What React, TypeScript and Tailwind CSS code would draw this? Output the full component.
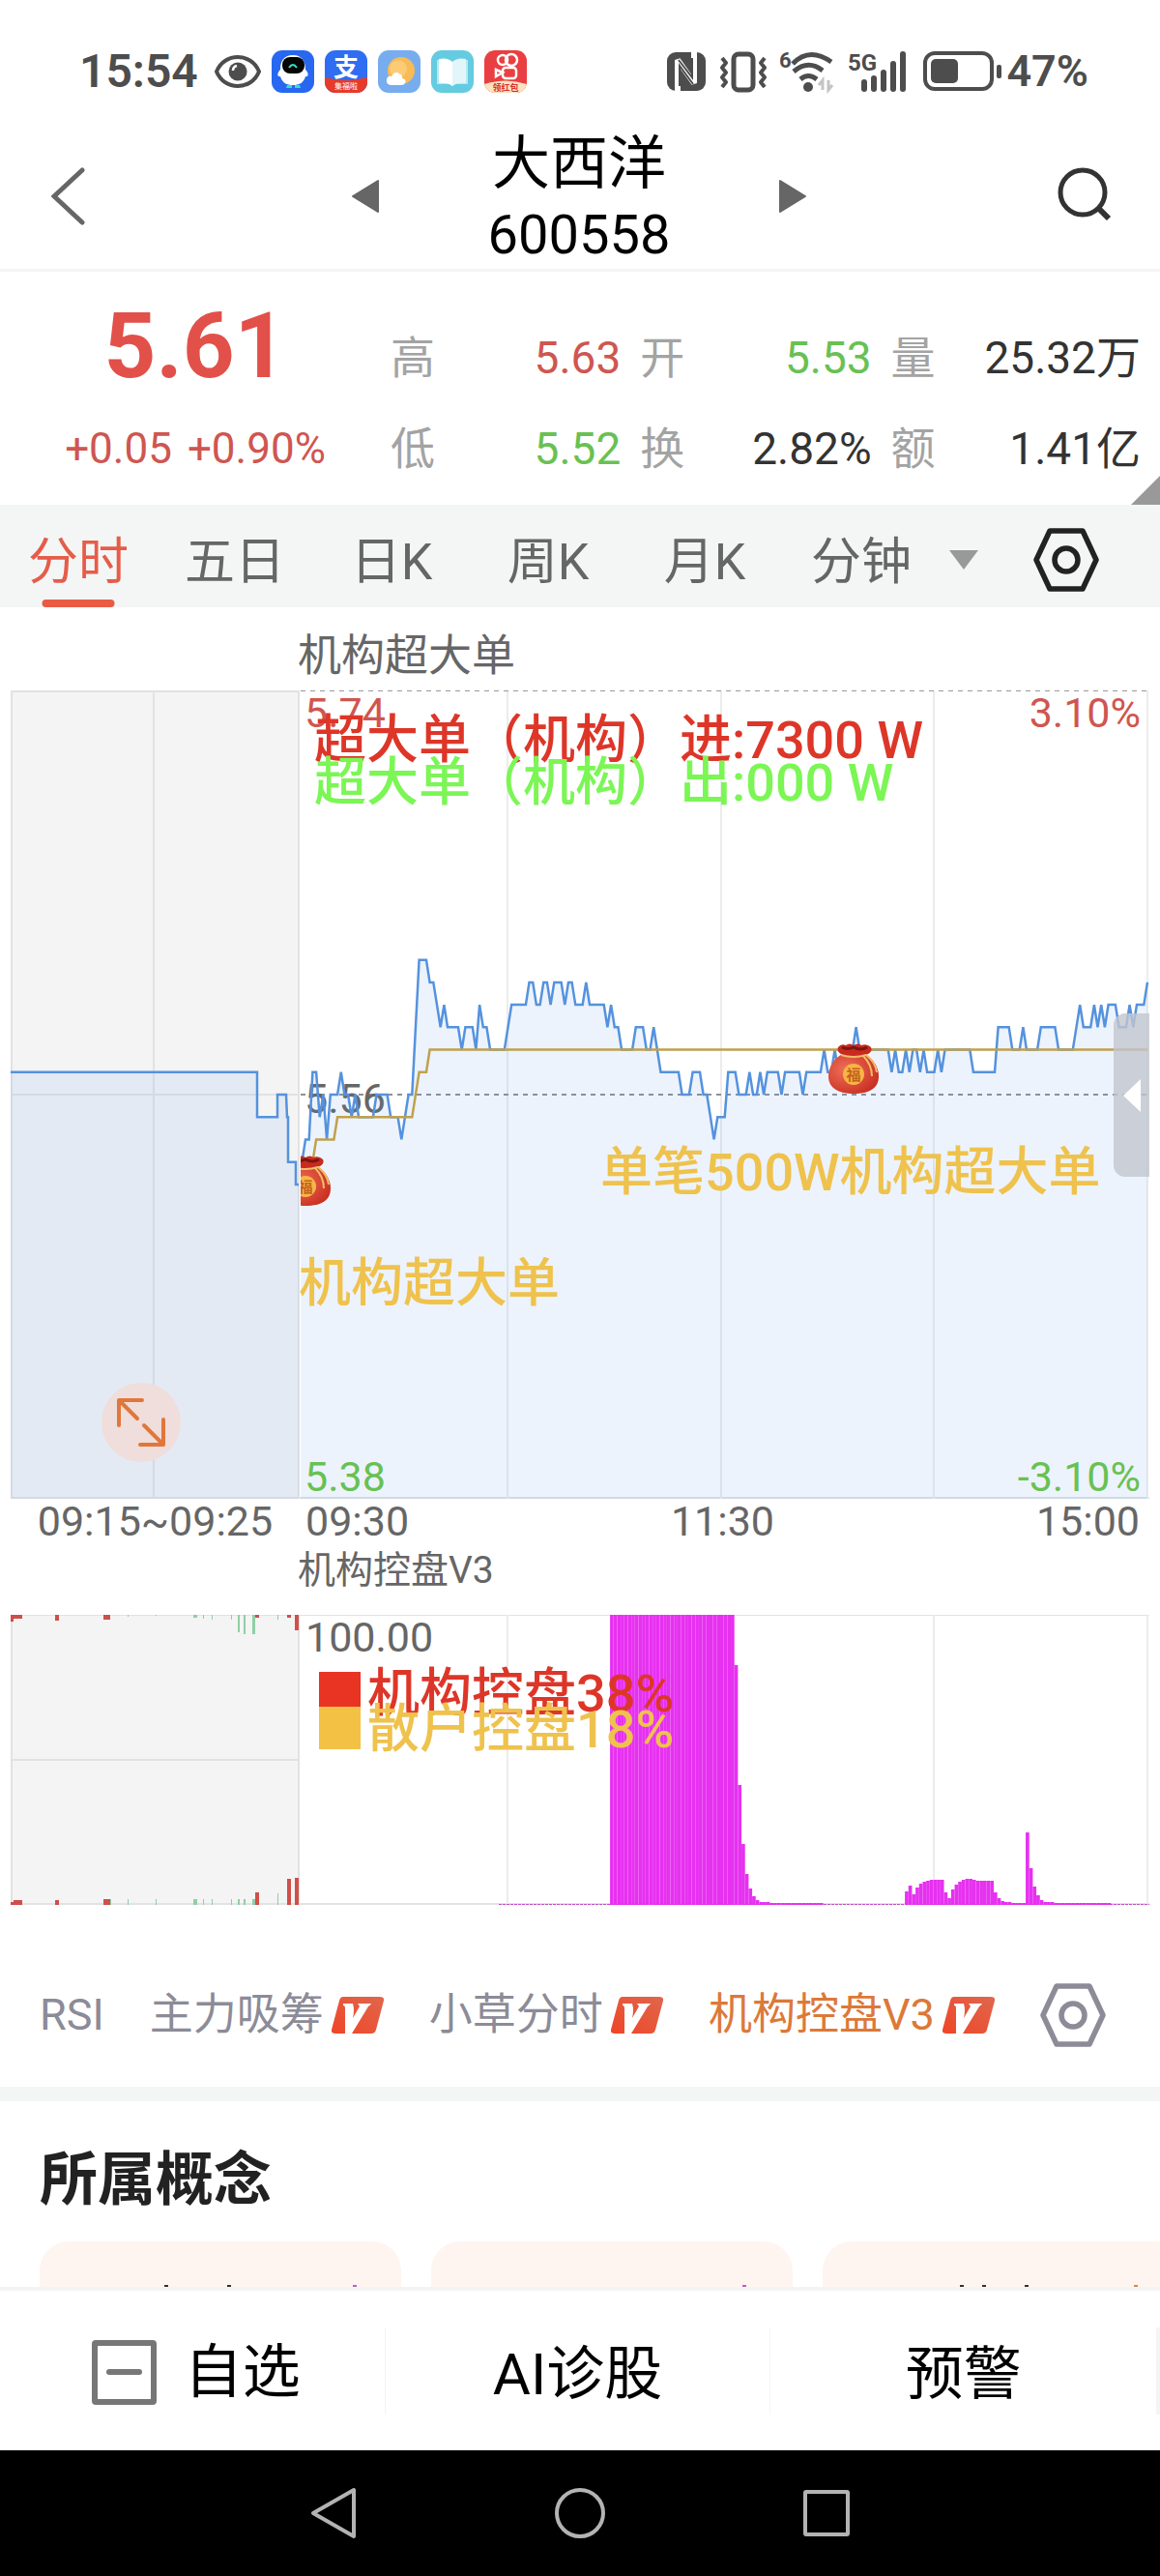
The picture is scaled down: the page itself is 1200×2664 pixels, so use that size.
import React from 'react';

const FONT = "font-[Roboto,'Noto_Sans_CJK_SC',sans-serif]";

type Point = [number, number];

// Chart geometry: one step per minute, one step per 0.01 around the previous close
const CHART_W = 1178;
const CHART_H = 836;
const OPEN_X = 294;
const PANE_X = 299;
const MINUTE = 3.675;
const TICK = CHART_H / 36;

const GRID_X = [514, 735, 955, 1176];

const PRE_OPEN: Point[] = [
  [0, 1], [255, 1], [255, -1], [276, -1], [276, 0], [285, 0], [286, -1], [287, -1], [287, -3], [295, -3], [295, -4], [298, -4],
];

const PRICE: Point[] = [
  [1, -4], [2, -3], [3, -2], [4, -2], [5, 1], [6, 1], [7, -1], [8, 0], [9, -2], [10, 0], [12, 0], [13, 1], [14, 0],
  [15, 0], [16, -1], [17, 0], [18, -1], [22, -1], [23, 0], [26, 0], [27, -1], [29, -1], [30, -2], [32, 0], [33, 0],
  [35, 6], [37, 6], [38, 5], [39, 5], [41, 3], [42, 4], [43, 3], [46, 3], [47, 2], [48, 3], [50, 3], [51, 2], [52, 4],
  [53, 3], [54, 3], [55, 2], [59, 2], [61, 4], [65, 4], [66, 5], [67, 5], [68, 4], [69, 4], [70, 5], [71, 5], [72, 4],
  [73, 5], [75, 5], [76, 4], [77, 5], [78, 5], [79, 4], [81, 4], [82, 5], [83, 4], [87, 4], [88, 3], [89, 4], [90, 3],
  [91, 3], [92, 2], [95, 2], [96, 3], [98, 3], [99, 2], [100, 2], [101, 3], [103, 1], [108, 1], [109, 0], [111, 0],
  [112, 1], [114, 1], [115, 0], [116, 0], [118, -2], [119, -1], [121, -1], [122, 1], [124, 1], [125, 0], [127, 0],
  [128, 1], [129, 0], [130, 0], [131, 1], [132, 0], [133, 1], [136, 1], [137, 0], [138, 1], [142, 1], [143, 0],
  [144, 1], [148, 1], [149, 2], [150, 1], [151, 1], [152, 2], [153, 1], [156, 1], [157, 2], [158, 3], [159, 2],
  [167, 2], [168, 1], [169, 2], [170, 1], [171, 1], [172, 2], [173, 1], [174, 2], [175, 2], [176, 1], [177, 2],
  [178, 1], [180, 1], [181, 2], [182, 1], [183, 2], [190, 2], [191, 1], [197, 1], [198, 3], [201, 3], [202, 2],
  [204, 2], [205, 3], [206, 2], [209, 2], [210, 3], [214, 3], [215, 2], [219, 2], [221, 4], [222, 3], [224, 3],
  [225, 4], [226, 3], [227, 4], [228, 3], [229, 4], [231, 4], [232, 3], [234, 3], [235, 4], [236, 3], [237, 4],
  [239, 4], [240, 5],
];

const AVERAGE: Point[] = [
  [4, -4], [5, -3], [6, -2], [11, -2], [12, -1], [33, -1], [35, 1], [37, 1], [38, 2], [240, 2],
];

const priceY = (level: number) => CHART_H / 2 - level * TICK;
const minuteX = (minute: number) => OPEN_X + minute * MINUTE;
const join = (points: Point[]) => points.map(([x, y]) => `${x.toFixed(1)},${y.toFixed(1)}`).join(' ');

const preLine = join(PRE_OPEN.map(([x, l]) => [x, priceY(l)]));
const priceLine = join(PRICE.map(([m, l]) => [minuteX(m), priceY(l)]));
const averageLine = join(AVERAGE.map(([m, l]) => [minuteX(m), priceY(l)]));

// Control indicator: start minute and bar heights out of 300
const CONTROL: { start: number; bars: number[] }[] = [
  { start: 89, bars: [...Array(35).fill(300), 248, 124, 63, 32, 17, 9, 5, 3, 3, 3, ...Array(15).fill(2)] },
  {
    start: 172,
    bars: [14, 20, 11, 18, 22, 24, 25, 26, 26, 26, 26, 13, 7, 16, 21, 24, 26, 27, 27, 26, 25, 25, 25, 25, 25, 13, 7, 4, 3, 3, 2, 2, 2, 2],
  },
  { start: 206, bars: [75, 38, 19, 10, 5, 3, 3, 3, ...Array(16).fill(2)] },
];

const RED = '#cf4f4a';
const GREEN = '#8fcfa6';

// x, width, height from the top edge, height from the bottom edge, colour
const AUCTION: [number, number, number, number, string][] = [
  [0, 3, 7, 3, RED], [3, 9, 4, 5, RED], [46, 4, 6, 5, RED], [96, 7, 5, 6, RED], [103, 1, 0, 6, GREEN],
  [121, 1, 2, 6, GREEN], [150, 1, 1, 6, GREEN], [189, 4, 3, 6, GREEN], [199, 1, 4, 6, GREEN], [208, 1, 5, 6, GREEN],
  [228, 1, 5, 6, GREEN], [235, 2, 18, 6, GREEN], [241, 2, 20, 6, GREEN], [250, 3, 20, 6, GREEN], [253, 4, 3, 13, RED],
  [276, 1, 5, 12, GREEN], [286, 4, 3, 27, RED], [294, 4, 16, 28, RED],
];

const HexIcon = ({ color, className }: { color: string; className: string }) => (
  <svg viewBox="0 0 68 66" className={className} fill="none" stroke={color} aria-hidden="true">
    <path d="M17 3H51L65 33L51 63H17L3 33Z" strokeWidth="5.5" strokeLinejoin="round" />
    <circle cx="34" cy="33" r="12" strokeWidth="5.5" />
  </svg>
);

const VipBadge = () => (
  <svg viewBox="0 0 54 38" className="h-[38px] w-[54px]" aria-hidden="true">
    <defs>
      <linearGradient id="vip" x1="0" y1="1" x2="1" y2="0">
        <stop offset="0" stopColor="#ef4527" />
        <stop offset="1" stopColor="#e0674c" />
      </linearGradient>
    </defs>
    <path d="M12 0H50Q55 0 54 4L46 34Q45 38 41 38H4Q-1 38 0 34L8 4Q9 0 12 0Z" fill="url(#vip)" />
    <path d="M12 7H22Q24 14 22 22L29 10Q28 8 27 7H41Q41 8 38 10L21 38H14V12Q14 9 12 9Z" fill="#fff" />
  </svg>
);

const LuckyBag = ({ x, y }: { x: number; y: number }) => (
  <g transform={`translate(${x} ${y})`}>
    <path d="M14 11C6 16 0 24 0 34C0 46 10 52 26 52C43 52 52 46 52 34C52 24 46 16 38 11Z" fill="url(#bag)" />
    <path d="M10 4Q13 0 18 2Q22 -1 26 2Q31 -1 34 2Q40 0 44 4Q46 8 41 11Q26 17 13 11Q8 8 10 4Z" fill="#c92a20" />
    <path d="M14 4Q20 7 26 4Q33 8 40 4" fill="none" stroke="#7c150f" strokeWidth="3" />
    <path d="M13 12Q26 16 39 12Q49 20 50 30M36 13Q45 22 45 34" fill="none" stroke="#f3bd6a" strokeWidth="2" />
    <circle cx="26" cy="32" r="11" fill="#f8b545" />
    <text x="26" y="38" textAnchor="middle" fontSize="15" fontWeight="700" fill="#c4611d">
      福
    </text>
  </g>
);

const StatusBar = () => (
  <div className="flex h-32 items-center justify-between pt-5 pr-[74px] pl-[82px] text-[#4d4d4d]">
    <div className="flex items-center gap-[11px]">
      <span className="mr-1.5 text-[48px] font-semibold">15:54</span>
      <svg viewBox="0 0 48 36" className="h-9 w-12" fill="none" stroke="currentColor" aria-hidden="true">
        <path d="M2 18C10 -2 38 -2 46 18C38 38 10 38 2 18Z" strokeWidth="4" />
        <circle cx="24" cy="18" r="9.500" fill="currentColor" stroke="none" />
        <path d="M19 17Q19 13 23 12" stroke="#fff" strokeWidth="2.500" />
      </svg>
      <svg viewBox="0 0 44 44" className="h-11 w-11" aria-hidden="true">
        <rect width="44" height="44" rx="11" fill="#2868f0" />
        <path d="M16 36h5v3h-6zM24 36h5l1 3h-6z" fill="#35e0c8" />
        <path d="M22 5C12 5 9 12 9 20C5 24 6 28 9 27C11 34 16 36 22 36S33 34 35 27C38 28 39 24 35 20C35 12 32 5 22 5Z" fill="#fff" />
        <rect x="11" y="7" width="23" height="17" rx="8" fill="#050505" />
        <path d="M18 18Q22 12 26 18" fill="none" stroke="#35d9c0" strokeWidth="2" />
      </svg>
      <svg viewBox="0 0 44 44" className="h-11 w-11" aria-hidden="true">
        <clipPath id="payClip">
          <rect width="44" height="44" rx="11" />
        </clipPath>
        <g clipPath="url(#payClip)">
          <rect width="44" height="44" fill="#2f6df2" />
          <text x="22" y="27" textAnchor="middle" fontSize="26" fontWeight="700" fill="#fff">
            支
          </text>
          <path d="M0 28Q22 34 44 28V44H0Z" fill="#e63b2b" />
          <text x="22" y="40" textAnchor="middle" fontSize="8" fill="#fff">
            集福啦
          </text>
        </g>
      </svg>
      <svg viewBox="0 0 44 44" className="h-11 w-11" aria-hidden="true">
        <rect width="44" height="44" rx="11" fill="#77acef" />
        <circle cx="24" cy="21" r="14" fill="#f9bb55" />
        <circle cx="21" cy="19" r="9" fill="#fbd58c" opacity=".6" />
        <path d="M13 36Q8 35 9 30Q10 26 14 27Q17 21 22 24Q26 26 25 29Q30 30 28 34Q27 36 24 36Z" fill="#fff" />
      </svg>
      <svg viewBox="0 0 44 44" className="h-11 w-11" aria-hidden="true">
        <rect width="44" height="44" rx="11" fill="#65cbe0" />
        <path d="M6 10H19L22 13L25 10H38V35H25L22 37L19 35H6Z" fill="#b3e9f3" />
        <path d="M8 9Q17 7 22 12V37Q17 33 8 34Z" fill="#fff" />
        <path d="M36 9Q27 7 22 12V37Q27 33 36 34Z" fill="#e2f6fa" />
      </svg>
      <svg viewBox="0 0 44 44" className="h-11 w-11" aria-hidden="true">
        <clipPath id="videoClip">
          <rect width="44" height="44" rx="11" />
        </clipPath>
        <g clipPath="url(#videoClip)">
          <rect width="44" height="44" fill="#e93f42" />
          <g fill="none" stroke="#fff" strokeWidth="2.500">
            <circle cx="19" cy="10" r="5" />
            <circle cx="28" cy="10" r="6" />
            <rect x="19" y="18" width="14" height="11" rx="3" />
            <path d="M19 23L12 20V27Z" />
          </g>
          <path d="M0 35Q22 28 44 35V44H0Z" fill="#fbe3c0" />
          <text x="22" y="42" textAnchor="middle" fontSize="9" fontWeight="700" fill="#d8302a">
            领红包
          </text>
        </g>
      </svg>
    </div>
    <div className="flex items-center">
      <svg viewBox="0 0 42 42" className="mr-3 h-[42px] w-[42px]" aria-hidden="true">
        <rect x="1" y="1" width="40" height="40" rx="9" fill="currentColor" />
        <path d="M12 43V9L29 33V-1" fill="none" stroke="#fff" strokeWidth="6" strokeLinejoin="bevel" />
        <path d="M14 36V15L28 34M13 9L27 27V7" fill="none" stroke="#4d4d4d" strokeWidth="2" />
      </svg>
      <svg viewBox="0 0 52 44" className="mr-3 h-11 w-[52px]" fill="none" stroke="currentColor" strokeWidth="4" aria-hidden="true">
        <rect x="16" y="4" width="20" height="37" rx="5" strokeWidth="5" />
        <path d="M4 8L8 13L4 18L8 23L4 28L8 33L4 38M48 8L44 13L48 18L44 23L48 28L44 33L48 38" strokeLinejoin="round" />
      </svg>
      <svg viewBox="0 0 58 46" className="mr-3 h-[46px] w-[58px]" fill="none" stroke="currentColor" strokeWidth="5" aria-hidden="true">
        <text x="-1" y="19" fontSize="22" fontWeight="700" fill="currentColor" stroke="none">
          6
        </text>
        <path d="M13 15Q30 -3 53 13M14 23Q29 10 44 22M21 31Q29 24 38 31" />
        <circle cx="29" cy="39" r="5" fill="currentColor" stroke="none" />
        <path d="M44 42V32L40 37M50 32V42L54 37" stroke="#c4c4c4" strokeWidth="3" />
      </svg>
      <svg viewBox="0 0 62 46" className="mr-4 h-[46px] w-[62px]" fill="currentColor" aria-hidden="true">
        <text x="0" y="22" fontSize="24" fontWeight="700">
          5G
        </text>
        <rect x="14" y="31" width="6" height="13" rx="3" />
        <rect x="24" y="27" width="6" height="17" rx="3" />
        <rect x="34" y="21" width="6" height="23" rx="3" />
        <rect x="44" y="12" width="6" height="32" rx="3" />
        <rect x="54" y="2" width="6" height="42" rx="3" />
      </svg>
      <svg viewBox="0 0 82 42" className="mr-1 h-[42px] w-[82px]" aria-hidden="true">
        <rect x="2" y="2" width="69" height="37" rx="10" fill="none" stroke="currentColor" strokeWidth="4" />
        <rect x="8" y="8" width="28" height="25" rx="5" fill="currentColor" />
        <rect x="76" y="14" width="5" height="14" rx="2" fill="currentColor" />
      </svg>
      <span className="text-[45px] font-semibold">47%</span>
    </div>
  </div>
);

const Header = () => (
  <header className="flex items-center border-b-[3px] border-[#f5f5f5] pt-1">
    <button aria-label="返回" className="w-[154px] pb-1 pl-[53px]">
      <svg viewBox="0 0 36 60" className="h-[60px] w-9" fill="none" stroke="#666" strokeWidth="5" strokeLinecap="round" aria-hidden="true">
        <path d="M32 3L3 30L32 57" />
      </svg>
    </button>
    <div className="flex flex-1 items-center justify-center gap-28">
      <button aria-label="上一只" className="pb-1">
        <svg viewBox="0 0 30 36" className="h-9 w-[30px]" fill="#666" stroke="#666" strokeWidth="2" strokeLinejoin="round" aria-hidden="true">
          <path d="M2 18L28 2V34Z" />
        </svg>
      </button>
      <h1 className="text-center text-black">
        <span className="block text-[60px] leading-[76px]">大西洋</span>
        <span className="block text-[56px] leading-[70px]">600558</span>
      </h1>
      <button aria-label="下一只" className="pb-1">
        <svg viewBox="0 0 30 36" className="h-9 w-[30px]" fill="#666" stroke="#666" strokeWidth="2" strokeLinejoin="round" aria-hidden="true">
          <path d="M28 18L2 2V34Z" />
        </svg>
      </button>
    </div>
    <button aria-label="搜索" className="flex w-[156px] justify-center pb-2">
      <svg viewBox="0 0 56 58" className="h-[58px] w-14" fill="none" stroke="#333" strokeWidth="5" aria-hidden="true">
        <circle cx="26" cy="27" r="23" />
        <path d="M42 43L53 54" strokeWidth="6" />
      </svg>
    </button>
  </header>
);

const STATS = [
  { label: '高', value: '5.63', color: 'text-[#cf5650]' },
  { label: '开', value: '5.53', color: 'text-[#68c152]' },
  { label: '量', value: '25.32万', color: 'text-[#333]' },
  { label: '低', value: '5.52', color: 'text-[#68c152]' },
  { label: '换', value: '2.82%', color: 'text-[#333]' },
  { label: '额', value: '1.41亿', color: 'text-[#333]' },
];

const Quote = () => (
  <section className="relative flex pr-5">
    <div className="w-[404px] pt-7 text-center text-[#e2504a]">
      <div className="text-[94px] leading-[98px] font-bold">5.61</div>
      <div className="flex justify-center gap-4 text-[44px] leading-[115px] text-[#cf5650]">
        <span>+0.05</span>
        <span>+0.90%</span>
      </div>
    </div>
    <dl className="grid flex-1 grid-cols-[237fr_238fr_257fr] content-start gap-x-5 pt-[42px] text-[46px] leading-[94px]">
      {STATS.map(s => (
        <div key={s.label} className="flex justify-between">
          <dt className="text-[#a3a3a3]">{s.label}</dt>
          <dd className={s.color}>{s.value}</dd>
        </div>
      ))}
    </dl>
    <svg viewBox="0 0 30 30" className="absolute right-0 bottom-0 h-[30px] w-[30px]" aria-hidden="true">
      <path d="M30 0V30H0Z" fill="#999" />
    </svg>
  </section>
);

const TABS = ['分时', '五日', '日K', '周K', '月K', '分钟'];

const PeriodTabs = () => (
  <nav className="grid h-[106px] grid-cols-[repeat(6,27fr)_38fr] bg-[#f4f6f6] text-[52px] text-[#666]">
    {TABS.map((tab, i) => (
      <button key={tab} className={i === 0 ? 'relative pt-3.5 text-[#e55d49]' : 'pt-3.5'}>
        {tab}
        {i === 0 && <span className="absolute bottom-0 left-1/2 h-2 w-[75px] -translate-x-1/2 rounded-full bg-[#ea5b46]" />}
      </button>
    ))}
    <div className="flex items-center pt-2 pl-2.5">
      <svg viewBox="0 0 30 20" className="h-5 w-[30px]" aria-hidden="true">
        <path d="M0 0H30L15 20Z" fill="#999" />
      </svg>
      <button aria-label="分时设置" className="ml-[57px]">
        <HexIcon color="#222" className="h-[66px] w-[68px]" />
      </button>
    </div>
  </nav>
);

const PriceChart = () => (
  <div className="relative">
    <svg viewBox={`0 0 ${CHART_W} ${CHART_H}`} className="block w-full" fontSize="43">
      <defs>
        <radialGradient id="bag" cx=".35" cy=".4" r=".7">
          <stop offset="0" stopColor="#f0705a" />
          <stop offset="1" stopColor="#c92f20" />
        </radialGradient>
        <clipPath id="pane">
          <rect x="300" y="0" width="878" height={CHART_H} />
        </clipPath>
      </defs>

      <rect width={PANE_X} height={CHART_H} fill="#f4f4f4" />
      <g stroke="#e2e2e2" strokeWidth="2">
        <path d={`M0 1H${PANE_X}M0 418H${PANE_X}M1 0V${CHART_H}M148 0V${CHART_H}M298 0V${CHART_H}M0 835H${CHART_W}`} />
        {GRID_X.map(x => (
          <path key={x} d={`M${x} 0V${CHART_H}`} stroke="#ececec" />
        ))}
      </g>
      <path d={`M300 0.500H${CHART_W}`} stroke="#999" strokeDasharray="5 5" />
      <path d={`M300 418H${CHART_W}`} stroke="#8b919a" strokeWidth="2" strokeDasharray="5 5" />

      <polygon points={`0,${CHART_H} ${preLine} 298,${CHART_H}`} fill="#5496e8" fillOpacity=".1" />
      <polyline points={preLine} fill="none" stroke="#5592de" strokeWidth="2.500" />

      <text x="304" y="437" fill="#666">5.56</text>
      <g clipPath="url(#pane)">
        <polygon points={`${OPEN_X},${CHART_H} ${priceLine} 1176,${CHART_H}`} fill="#5496e8" fillOpacity=".11" />
        <polyline points={priceLine} fill="none" stroke="#5592de" strokeWidth="2.500" />
        <polyline points={averageLine} fill="none" stroke="#bfa14e" strokeWidth="2.500" />
        <LuckyBag x={279} y={481} />
        <LuckyBag x={846} y={365} />
      </g>

      <text x="304" y="38" fill="#cf5650">5.74</text>
      <text x="1169" y="38" fill="#cf5650" textAnchor="end">3.10%</text>
      <text x="304" y="828" fill="#68c152">5.38</text>
      <text x="1169" y="828" fill="#68c152" textAnchor="end">-3.10%</text>

      <g fontSize="54" fontWeight="500">
        <text x="314" y="70" fill="#dd3628">超大单（机构）进:7300 W</text>
        <text x="314" y="114" fill="#7bf655">超大单（机构）出:000 W</text>
        <text x="298" y="632" fill="#efc24d">机构超大单</text>
        <text x="610" y="517" fill="#efc24d">单笔500W机构超大单</text>
      </g>
    </svg>

    <button aria-label="全屏" className="absolute bottom-[38px] left-[94px] flex h-[82px] w-[82px] items-center justify-center rounded-full bg-[#efdedb]">
      <svg viewBox="0 0 50 50" className="h-[50px] w-[50px]" fill="none" stroke="#e0773b" strokeWidth="4" strokeLinecap="round" strokeLinejoin="round" aria-hidden="true">
        <path d="M2 28V2H26M3 3L21 21M48 22V48H24M47 47L28 28" />
      </svg>
    </button>
    <button aria-label="展开" className="absolute top-[334px] right-0 flex h-[169px] w-[37px] items-center justify-center rounded-l-xl bg-[#c3c5ce]/80">
      <svg viewBox="0 0 18 34" className="h-[34px] w-[18px]" aria-hidden="true">
        <path d="M0 17L18 0V34Z" fill="#fff" />
      </svg>
    </button>
  </div>
);

const ControlChart = () => (
  <svg viewBox="0 0 1178 300" className="block w-full" fontSize="54">
    <rect width={PANE_X} height="300" fill="#f4f4f4" />
    <g stroke="#e2e2e2" strokeWidth="2">
      <path d={`M0 150H${PANE_X}M1 0V300M298 0V300M0 299H${CHART_W}`} />
      <path d={`M0 0.500H${CHART_W}`} strokeWidth="1" />
      {GRID_X.map(x => (
        <path key={x} d={`M${x} 0V300`} stroke="#ececec" />
      ))}
    </g>
    {AUCTION.map(([x, w, top, bottom, color]) => (
      <g key={x} fill={color}>
        <rect x={x} y="0" width={w} height={top} />
        <rect x={x} y={300 - bottom} width={w} height={bottom} />
      </g>
    ))}
    <path d="M505 299.500H1178" stroke="#c050c8" strokeDasharray="3 1" />
    {CONTROL.map(({ start, bars }) =>
      bars.map((h, i) => (
        <rect key={start + i} x={minuteX(start + i) - 1} y={300 - h} width={MINUTE} height={h} fill="#e631f0" />
      ))
    )}
    <text x="305" y="38" fontSize="43" fill="#666">100.00</text>
    <rect x="319" y="59" width="43" height="44" fill="#e93323" />
    <rect x="319" y="95" width="43" height="44" fill="#f3c144" />
    <g fontWeight="500">
      <text x="369" y="100" fill="#dd3628">机构控盘38%</text>
      <text x="369" y="137" fill="#efc24d">散户控盘18%</text>
    </g>
  </svg>
);

const INDICATORS = [
  { name: 'RSI', vip: false, active: false },
  { name: '主力吸筹', vip: true, active: false },
  { name: '小草分时', vip: true, active: false },
  { name: '机构控盘V3', vip: true, active: true },
];

const IndicatorTabs = () => (
  <nav className="flex h-[188px] items-center justify-between pt-10 pr-14 pl-[41px] text-[45px] text-[#8c8b98]">
    {INDICATORS.map(ind => (
      <button key={ind.name} className={ind.active ? 'flex items-center gap-2 text-[#dc7938]' : 'flex items-center gap-2'}>
        {ind.name}
        {ind.vip && <VipBadge />}
      </button>
    ))}
    <button aria-label="指标设置">
      <HexIcon color="#8c8b98" className="h-[66px] w-[68px]" />
    </button>
  </nav>
);

// Top edges of the card contents, the rest sits under the bottom bar
const CARDS: { x: number; color: string }[][] = [
  [{ x: 129, color: '#333' }, { x: 194, color: '#333' }, { x: 324, color: '#c05cc8' }],
  [{ x: 322, color: '#c05cc8' }],
  [{ x: 142, color: '#333' }, { x: 165, color: '#333' }, { x: 209, color: '#333' }, { x: 322, color: '#d08a4c' }],
];

const Concepts = () => (
  <section className="overflow-hidden border-t-[15px] border-[#f4f6f6] pt-[37px] pl-[41px]">
    <h2 className="text-[60px] leading-[90px] font-bold text-[#222]">所属概念</h2>
    <div className="mt-[18px] flex gap-[31px]">
      {CARDS.map((marks, i) => (
        <div key={i} className="w-[374px] shrink-0 rounded-t-[30px] bg-[#fef5f0]">
          <svg viewBox="0 0 374 47" className="block w-full" aria-hidden="true">
            {marks.map(m => (
              <rect key={m.x} x={m.x} y="45" width="4" height="2" fill={m.color} />
            ))}
          </svg>
        </div>
      ))}
    </div>
  </section>
);

const BottomBar = () => (
  <footer>
    <div className="grid h-[169px] grid-cols-[repeat(3,1fr)_4px] items-center border-t-4 border-[#f3f5f5] text-[60px] text-black">
      <button className="flex h-[90px] items-center justify-center gap-7 border-r border-[#f3f5f5] pt-1 pl-2">
        <svg viewBox="0 0 68 68" className="h-[68px] w-[68px]" fill="none" stroke="#777" strokeWidth="6" strokeLinecap="round" aria-hidden="true">
          <rect x="3" y="3" width="61" height="61" rx="1" />
          <path d="M18 33H49" />
        </svg>
        自选
      </button>
      <button className="h-[90px] border-r border-[#f3f5f5] pt-1">AI诊股</button>
      <button className="h-[90px] pt-1">预警</button>
      <span className="h-[90px] bg-[#f3f5f5]" />
    </div>
    <div className="flex h-[130px] items-center justify-center gap-[201px] bg-black">
      <button aria-label="后退">
        <svg viewBox="0 0 54 54" className="h-[54px] w-[54px]" fill="none" stroke="#b3b3b3" strokeWidth="4" strokeLinejoin="round" aria-hidden="true">
          <path d="M6 27L48 3V51Z" />
        </svg>
      </button>
      <button aria-label="主页">
        <svg viewBox="0 0 54 54" className="h-[54px] w-[54px]" fill="none" stroke="#b3b3b3" strokeWidth="4" aria-hidden="true">
          <circle cx="27" cy="27" r="24" />
        </svg>
      </button>
      <button aria-label="最近任务">
        <svg viewBox="0 0 54 54" className="h-[54px] w-[54px]" fill="none" stroke="#b3b3b3" strokeWidth="4" strokeLinejoin="round" aria-hidden="true">
          <rect x="5" y="5" width="44" height="44" rx="1" />
        </svg>
      </button>
    </div>
  </footer>
);

export default function App() {
  return (
    <div className={`bg-white ${FONT}`}>
      <StatusBar />
      <Header />
      <Quote />
      <PeriodTabs />
      <main className="px-[11px] text-[#666]">
        <h2 className="pt-4 pl-[297px] text-[45px] leading-[70px]">机构超大单</h2>
        <PriceChart />
        <div className="flex text-[43px] leading-[46px]">
          <span className="w-[299px] text-center">09:15~09:25</span>
          <div className="flex flex-1 justify-between pr-2.5 pl-1.5">
            <span>09:30</span>
            <span>11:30</span>
            <span>15:00</span>
          </div>
        </div>
        <h2 className="mb-[18px] pl-[297px] text-[39px] leading-[56px]">机构控盘V3</h2>
        <ControlChart />
      </main>
      <IndicatorTabs />
      <Concepts />
      <BottomBar />
    </div>
  );
}
